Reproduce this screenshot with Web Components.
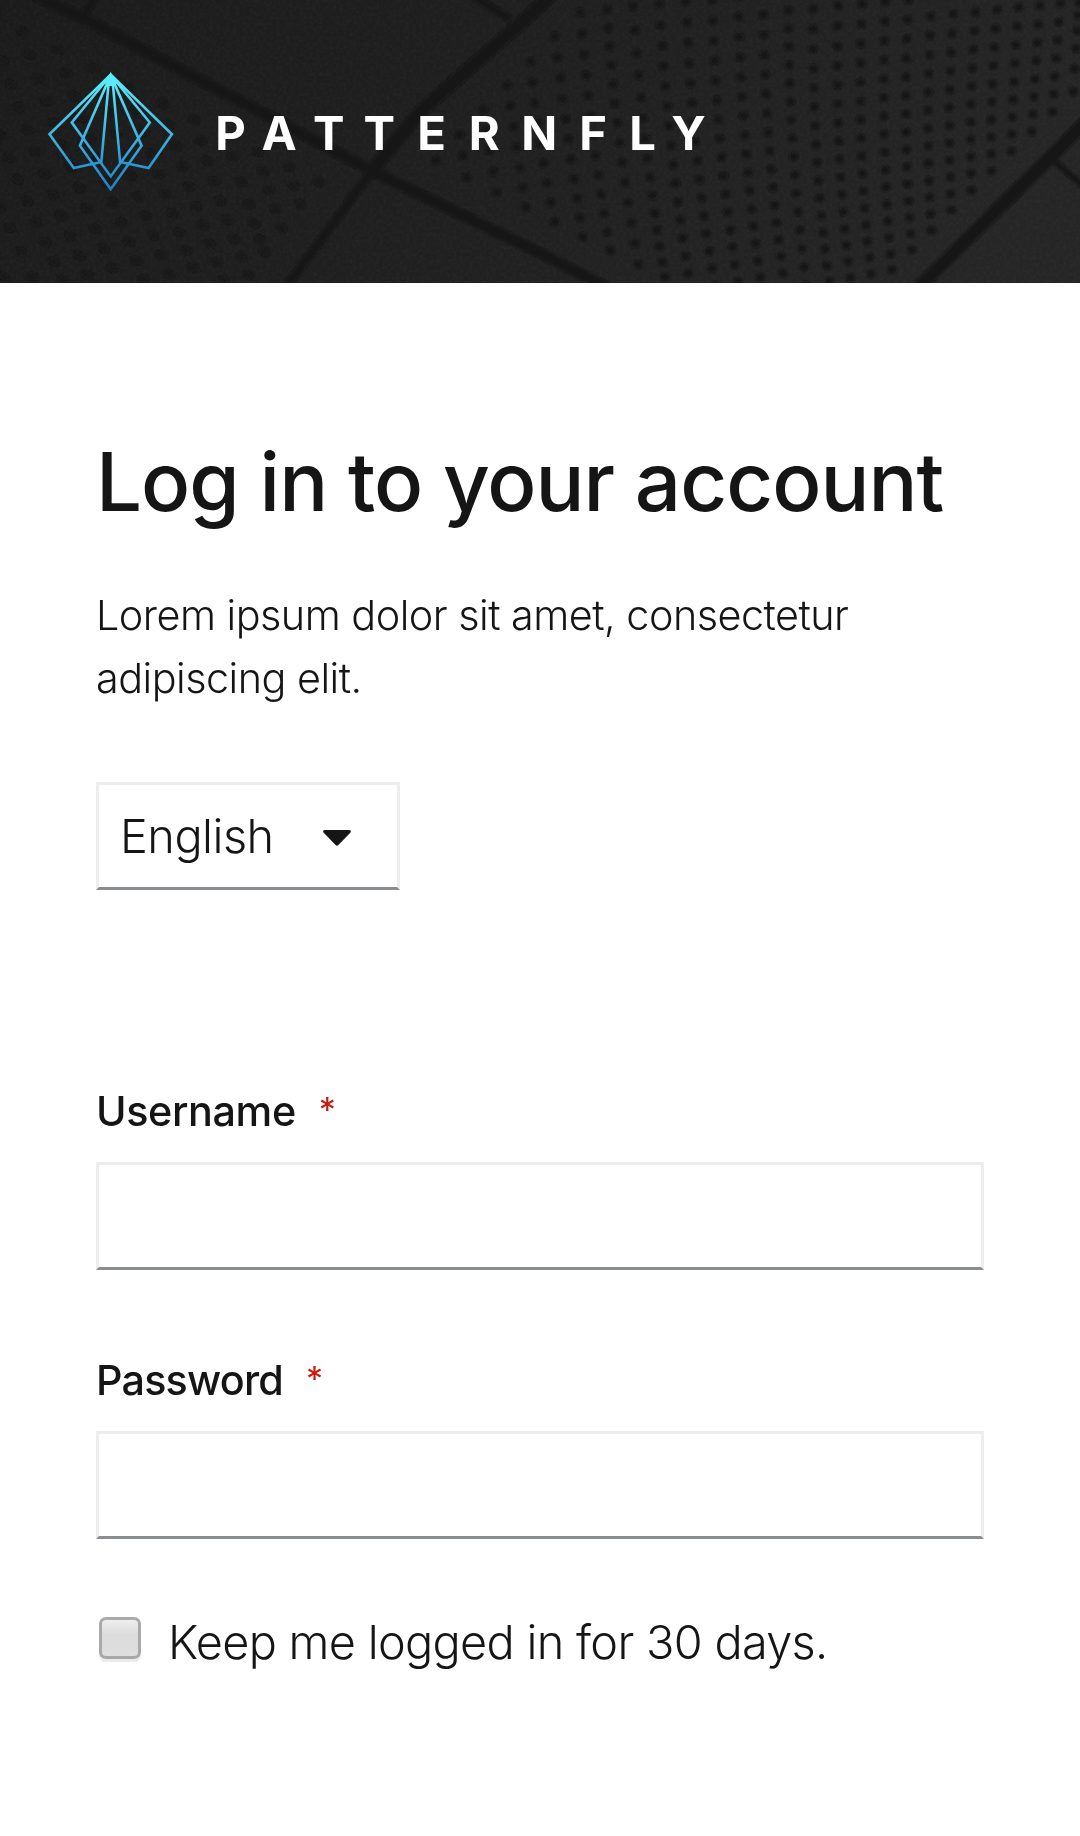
<!DOCTYPE html>
<html lang="en">
<head>
<meta charset="utf-8">
<title>PatternFly login</title>
<style>
html, body { margin: 0; background: #fff; }
body { font-family: Inter, "Noto Sans", sans-serif; font-weight: 300; color: #151515; }
</style>
</head>
<body>
<pf-login-page>
  <pf-brand slot="header"></pf-brand>
  <pf-login-header slot="main">
    Log in to your account
    <span slot="subtitle">Lorem ipsum dolor sit amet, consectetur<br>adipiscing elit.</span>
    <pf-select slot="utility">English</pf-select>
  </pf-login-header>
  <pf-text-field slot="main" name="username" style="--label-spacing:-.38px">Username</pf-text-field>
  <pf-text-field slot="main" name="password" type="password" style="--label-spacing:-.8px">Password</pf-text-field>
  <pf-check slot="main">Keep me logged in for 30 days.</pf-check>
</pf-login-page>

<script>
const define = (name, html, setup) => customElements.define(name, class extends HTMLElement {
  connectedCallback() {
    if (this.shadowRoot) return;
    const root = this.attachShadow({ mode: 'open' });
    root.innerHTML = html;
    if (setup) setup(this, root);
  }
});

/* Perforated panels. Each entry is one curved run of holes:
   first, middle and last centre, then the number of holes. */
const RIGHT = [
 [1566,8,1558,118,1548,275,6],[1511,10,1499,175,1488,335,7],[1451,17,1439,210,1428,395,8],[1390,22,1376,245,1369,454,9],
 [1327,29,1313,279,1311,513,10],[1265,36,1252,313,1253,571,11],[1200,42,1189,350,1195,630,12],[1135,49,1127,385,1137,691,13],
 [1070,0,1063,396,1080,749,15],[1003,5,1000,430,1022,810,16],[935,12,933,441,962,821,16],[866,18,869,451,901,833,16],
 [793,26,803,461,840,845,16],[721,-24,733,415,773,856,17],[648,-18,665,425,706,820,16],[575,-12,597,434,640,832,16],
 [500,0,525,444,575,845,16],[424,5,454,454,508,856,16],[346,12,384,465,438,872,16],[270,20,312,475,363,831,15],
 [194,28,228,398,285,793,14],[117,37,154,408,204,751,13],[43,109,82,418,124,710,11],[-28,185,1,430,43,666,9],
 [-96,256,-68,442,-41,622,7],[-164,328,-146,453,-126,577,5],[-234,405,-224,468,-213,531,3],[-302,482,-302,482,-302,482,1]
];
const LEFT = [
 [64,93,193,468,326,804,12],[170,150,295,514,418,838,12],[7,182,128,521,255,825,11],[272,205,380,527,490,822,11],
 [0,405,91,635,183,842,8],[374,260,470,552,560,803,10],[472,311,559,589,650,840,10],[0,622,44,717,95,830,4],
 [565,360,640,602,720,825,9],[675,468,731,643,768,755,6],[748,455,782,570,818,684,5],[838,500,853,557,872,613,3],
 [925,545,925,545,925,545,1],[12,830,12,830,12,830,1]
];
const holes = (runs, ox, rx, ry, rot) => runs.map(([x0,y0,xm,ym,x1,y1,n]) => {
  const cx = 2*xm - (x0+x1)/2, cy = 2*ym - (y0+y1)/2;
  let s = '';
  for (let i = 0; i < n; i++) {
    const t = n > 1 ? i/(n-1) : 0, u = 1-t;
    const x = (u*u*x0 + 2*u*t*cx + t*t*x1)/2.904 + ox, y = (u*u*y0 + 2*u*t*cy + t*t*y1)/3;
    s += `<ellipse rx="${rx}" ry="${ry}" transform="translate(${x.toFixed(1)} ${y.toFixed(1)}) rotate(${rot})"/>`;
  }
  return s;
}).join('');

define('pf-backdrop', `
<style>:host{display:block}svg{display:block;width:100%;height:100%}</style>
<svg viewBox="0 0 1080 283" preserveAspectRatio="none" aria-hidden="true">
  <defs>
    <linearGradient id="bg" x1="0" y1="0" x2="1" y2=".2"><stop offset="0" stop-color="#1b1b1b"/><stop offset=".5" stop-color="#1f1f1f"/><stop offset="1" stop-color="#252525"/></linearGradient>
    <filter id="soft" x="-5%" y="-5%" width="110%" height="110%"><feGaussianBlur stdDeviation="1"/></filter>
    <filter id="grain" x="0" y="0" width="100%" height="100%"><feTurbulence type="fractalNoise" baseFrequency=".3" numOctaves="2" seed="4"/><feColorMatrix values="0 0 0 0 .5  0 0 0 0 .5  0 0 0 0 .5  .08 0 0 0 -.03"/></filter>
  </defs>
  <rect width="1080" height="283" fill="url(#bg)"/>
  <rect width="1080" height="283" filter="url(#grain)"/>
  <g filter="url(#soft)" fill="none" stroke="#151515">
    <path d="M34-5 83 18 372 171 540 253 606 287" stroke-width="10.5"/>
    <path d="M556-10 540 6 420 112 372 171" stroke-width="13"/>
    <path d="M372 171 286 287" stroke-width="8"/>
    <path d="M474-3 510 19" stroke-width="7"/>
    <path d="M97-4 82 17" stroke-width="7"/>
    <path d="M1086 122 918 288" stroke-width="13"/>
    <path d="M1050 158 1086 188" stroke-width="6"/>
  </g>
  <g filter="url(#soft)" fill="#151515">
    <g id="right"></g>
    <g id="left" opacity=".85"></g>
  </g>
</svg>`, (el, root) => {
  root.getElementById('right').innerHTML = holes(RIGHT, 540, 4.4, 4.1, 0);
  root.getElementById('left').innerHTML = holes(LEFT, 0, 5.4, 3.9, 25);
});

define('pf-brand', `
<style>:host{display:block}svg{display:block;overflow:visible}text{font:700 47.2px Inter,sans-serif;fill:#fff;text-anchor:middle}</style>
<svg width="664" height="119" viewBox="48 72 664 119" role="img" aria-label="PatternFly">
  <defs><linearGradient id="g" gradientUnits="userSpaceOnUse" x1="0" y1="73" x2="0" y2="191"><stop offset="0" stop-color="#61f2ff"/><stop offset=".12" stop-color="#5ae4f8"/><stop offset=".65" stop-color="#35a6dc"/><stop offset="1" stop-color="#1c7fc4"/></linearGradient></defs>
  <g fill="none" stroke="url(#g)" stroke-width="2.6">
    <path d="M110.7 74.6 49.5 134.2 73.8 168.1 101.3 162 109.3 76"/>
    <path d="M110.7 74.6 171.9 134.2 148.6 168.1 120.1 162 112.1 76"/>
    <path d="M110.7 75 71.8 122.5 110.7 176.4 149.8 122.5Z"/>
    <path d="M110.7 75 79.9 145.7 110.7 189.2 141.6 145.7Z"/>
  </g>
  <path d="M110.7 73 118.5 81 114 86H107.4L103 81Z" fill="#5ceafb"/>
  <text y="149.6" x="230.6 279 328.8 379.3 431.6 484.3 539.3 593 642.6 688.6">PATTERNFLY</text>
</svg>`);

define('pf-login-page', `
<style>
:host{display:flex;flex-direction:column;min-height:1836px;background:#fff}
header{display:grid;height:283px;overflow:hidden}
header>*{grid-area:1/1}
.brand{padding:72px 48px}
main{display:flex;flex-direction:column;padding:144px 96px 0}
</style>
<header><pf-backdrop></pf-backdrop><div class="brand"><slot name="header"></slot></div></header>
<main><slot name="main"></slot></main>`);

define('pf-login-header', `
<style>
:host{display:flex;flex-direction:column;align-items:flex-start;margin-bottom:194px}
h1{margin:0;font:450 81.5px/110px Inter,sans-serif;letter-spacing:-.98px;white-space:nowrap}
p{margin:47px 0 72px;font-size:41.3px;line-height:63px;letter-spacing:-.5px}
</style>
<h1><slot></slot></h1><p><slot name="subtitle"></slot></p><slot name="utility"></slot>`);

define('pf-select', `
<style>
:host{display:block}
button{all:unset;box-sizing:border-box;display:flex;align-items:center;justify-content:space-between;width:304px;height:108px;padding:0 46px 0 21px;border:3px solid #ededed;border-bottom-color:#8a8d90;font-size:46.8px;letter-spacing:-.5px}
span{padding-bottom:1px}
svg{display:block;margin-top:3px}
</style>
<button type="button"><span><slot></slot></span><svg width="28" height="16" viewBox="0 0 28 16"><path d="M1.6 0H26.4Q28.8.6 27.3 2.7L15.4 15Q14 16.4 12.6 15L.7 2.7Q-.8.6 1.6 0Z" fill="#151515"/></svg></button>`);

define('pf-text-field', `
<style>
:host{display:block;margin-bottom:83px}
label{display:flex;align-items:flex-start;gap:23px;margin-bottom:24px;font:500 41.3px/54px Inter,sans-serif;letter-spacing:var(--label-spacing)}
.req{font:400 34px/51px Inter,sans-serif;color:#c9190b}
input{display:block;box-sizing:border-box;width:100%;height:108px;margin:0;border:3px solid #ededed;border-bottom-color:#8a8d90;border-radius:0;background:#fff;padding:0 21px;font:300 48px Inter,sans-serif;outline:0}
</style>
<label for="f"><span><slot></slot></span><span class="req" aria-hidden="true">*</span></label><input id="f">`, (el, root) => {
  root.querySelector('input').type = el.getAttribute('type') || 'text';
});

define('pf-check', `
<style>
:host{display:block;margin-top:-16px}
label{display:flex;align-items:flex-start;font-size:46.8px;line-height:72px;letter-spacing:-.68px;white-space:nowrap}
input{appearance:none;box-sizing:border-box;flex:none;width:42px;height:42px;margin:11px 27px 0 3px;border:3px solid #a9a9a9;border-radius:7px;background:linear-gradient(#eee,#dcdcdc 40%,#dedede);box-shadow:0 3px 0 #ebebeb}
</style>
<label><input type="checkbox"><span><slot></slot></span></label>`);
</script>
</body>
</html>
